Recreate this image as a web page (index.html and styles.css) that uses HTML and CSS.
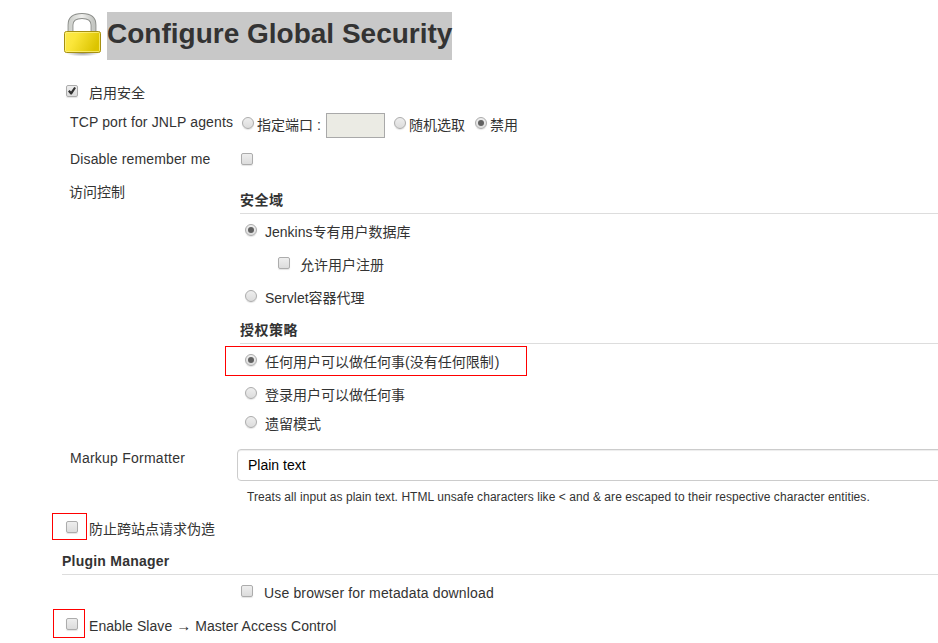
FILE: index.html
```
<!DOCTYPE html>
<html lang="zh">
<head>
<meta charset="utf-8">
<title>Configure Global Security</title>
<link rel="stylesheet" href="styles.css">
</head>
<body>
<main class="page">
  <header class="header">
    <svg class="lock" width="40" height="46" viewBox="0 0 40 46">
      <defs>
        <linearGradient id="body" x1="0" y1="0" x2="1" y2=".3"><stop offset="0" stop-color="#fce94f"/><stop offset=".35" stop-color="#fbe63a"/><stop offset="1" stop-color="#dcc400"/></linearGradient>
        <linearGradient id="metal" x1="0" y1="0" x2="1" y2="0"><stop offset="0" stop-color="#d0d2ce"/><stop offset=".5" stop-color="#eeeeec"/><stop offset="1" stop-color="#c4c6c2"/></linearGradient>
        <radialGradient id="shade"><stop offset="0" stop-color="#000" stop-opacity=".4"/><stop offset="1" stop-color="#000" stop-opacity="0"/></radialGradient>
      </defs>
      <ellipse cx="20.500" cy="41" rx="17" ry="3.500" fill="url(#shade)"/>
      <path d="M8.500 22V13C8.500 7 12.500 4 20 4S31.500 7 31.500 13V22" fill="none" stroke="#8b8d89" stroke-width="5.800"/>
      <path d="M8.500 22V13C8.500 7 12.500 4 20 4S31.500 7 31.500 13V22" fill="none" stroke="url(#metal)" stroke-width="4"/>
      <rect x="2.500" y="19.500" width="36" height="21" rx="2" fill="url(#body)" stroke="#a58f10"/>
      <rect x="3.500" y="20.500" width="34" height="19" rx="1" fill="none" stroke="#fff58c" stroke-opacity=".7"/>
    </svg>
    <h1 class="title">Configure Global Security</h1>
  </header>

  <label class="row enable"><span class="mark"><input type="checkbox" checked></span><span>启用安全</span></label>

  <div class="row tcp">
    <span class="name">TCP port for JNLP agents</span>
    <label class="choice port"><input type="radio" name="port"><span>指定端口 :</span></label>
    <input class="port-field" type="text" disabled>
    <label class="choice random"><input type="radio" name="port"><span>随机选取</span></label>
    <label class="choice"><input type="radio" name="port" checked><span>禁用</span></label>
  </div>

  <div class="row remember">
    <span class="name">Disable remember me</span>
    <input type="checkbox">
  </div>

  <section class="access">
    <span class="access-name">访问控制</span>
    <div class="groups">
      <h2 class="group-title">安全域</h2>
      <label class="option"><input type="radio" name="realm" checked><span>Jenkins专有用户数据库</span></label>
      <label class="option nested"><input type="checkbox"><span>允许用户注册</span></label>
      <label class="option"><input type="radio" name="realm"><span>Servlet容器代理</span></label>
      <h2 class="group-title second">授权策略</h2>
      <label class="option outlined"><input type="radio" name="auth" checked><span>任何用户可以做任何事(没有任何限制<span class="paren">)</span></span></label>
      <label class="option logged"><input type="radio" name="auth"><span>登录用户可以做任何事</span></label>
      <label class="option legacy"><input type="radio" name="auth"><span>遗留模式</span></label>
    </div>
  </section>

  <section class="markup">
    <span class="markup-name">Markup Formatter</span>
    <div class="formatter">
      <div class="select">Plain text</div>
      <p class="help">Treats all input as plain text. HTML unsafe characters like &lt; and &amp; are escaped to their respective character entities.</p>
    </div>
  </section>

  <label class="row csrf"><span class="mark outlined-mark"><input type="checkbox"></span><span>防止跨站点请求伪造</span></label>

  <h2 class="plugin-title">Plugin Manager</h2>
  <label class="row metadata"><input type="checkbox"><span>Use browser for metadata download</span></label>

  <label class="row slave"><span class="mark outlined-mark"><input type="checkbox"></span><span>Enable Slave <span class="arrow">→</span> Master Access Control</span></label>
</main>
</body>
</html>
```
FILE: styles.css
```
* { box-sizing: border-box; }
body {
  margin: 0;
  background: #fff;
  color: #333;
  font: 14px/20px "Liberation Sans", "Noto Sans CJK SC", sans-serif;
  overflow: hidden;
}
.page { padding: 12px 0 0 62px; }
h1, h2, p { margin: 0; }
.header { display: flex; height: 48px; }
.lock { flex: none; margin-right: 5px; }
.title {
  width: 345px;
  height: 48px;
  background: #c8c8c8;
  font-size: 28px;
  line-height: 44px;
  white-space: nowrap;
}

input[type="checkbox"], input[type="radio"] {
  appearance: none;
  flex: none;
  display: grid;
  place-items: center;
  width: 12px;
  height: 12px;
  margin: 0 0 4px;
  border: 1px solid #acacac;
  background: linear-gradient(#eee, #dcdcdc);
  box-shadow: 0 1px 1px #e4e4e4;
}
input[type="checkbox"] { border-radius: 2px; }
input[type="radio"] { border-radius: 50%; }
input[type="radio"]:checked::before {
  content: "";
  width: 6px;
  height: 6px;
  border-radius: 50%;
  background: #606060;
}
input[type="checkbox"]:checked::before {
  content: "";
  width: 8px;
  height: 8px;
  background: #333;
  clip-path: polygon(0 55%, 20% 38%, 38% 55%, 78% 0, 100% 14%, 48% 94%, 32% 94%);
}

.row { display: flex; align-items: center; white-space: nowrap; }
.mark { display: flex; align-items: center; width: 27px; padding-left: 4px; }
.enable { height: 30px; margin-top: 18px; }
.name { width: 180px; padding-left: 8px; letter-spacing: .14px; }
.tcp { height: 34px; }
.tcp .name { margin-bottom: 6px; }
.choice { display: flex; align-items: center; gap: 3px; }
.port { width: 84px; }
.port-field {
  width: 59px;
  height: 25px;
  margin-right: 9px;
  border: 1px solid #a9a9a9;
  background: #ebebe4;
}
.random { width: 81px; }
.remember { height: 34px; }
.remember input { margin: 0 0 0 -1px; }

.access { display: flex; height: 258px; }
.access-name { width: 178px; padding: 6px 0 0 7px; }
.groups { flex: 1; padding-top: 11px; }
.group-title, .plugin-title {
  height: 27px;
  border-bottom: 1px solid #ddd;
  font-size: 14px;
  line-height: 26px;
}
.group-title { letter-spacing: .5px; }
.group-title.second { margin-top: 1px; }
.option { display: flex; align-items: center; gap: 8px; height: 36px; padding-left: 5px; white-space: nowrap; }
.option.nested { height: 30px; padding-left: 38px; gap: 10px; }
.option.outlined {
  width: 302px;
  height: 30px;
  margin: 2px 0 0 -15px;
  padding: 1px 0 0 19px;
  border: 1px solid #f00;
}
.paren { margin-left: 1px; }
.option.logged { height: 38px; }
.option.legacy { height: 20px; }

.markup { display: flex; height: 79px; padding-top: 15px; }
.markup-name { width: 175px; margin-top: -1px; padding-left: 8px; letter-spacing: .24px; }
.formatter { flex: 1; overflow: hidden; }
.select {
  width: 720px;
  height: 32px;
  padding-left: 10px;
  border: 1px solid #ccc;
  border-radius: 4px;
  box-shadow: inset 0 1px 1px rgba(0, 0, 0, .075);
  color: #000;
  line-height: 30px;
}
.help { padding: 6px 0 0 10px; font-size: 12px; letter-spacing: .065px; white-space: nowrap; }
.csrf { height: 27px; }
.csrf > span:last-child, .slave > span:last-child { margin-top: 4px; }
.outlined-mark { margin-left: -10px; margin-right: 2px; width: 35px; height: 27px; padding-left: 13px; border: 1px solid #f00; }
.outlined-mark input { margin: 0; }
.plugin-title { margin-top: 8px; letter-spacing: .23px; }
.metadata { height: 34px; padding-left: 179px; gap: 11px; }
.metadata > span { margin-top: 2px; letter-spacing: .15px; }
.metadata input { margin-bottom: 2px; }
.slave { height: 29px; letter-spacing: .06px; }
.arrow { font-family: "Liberation Serif", serif; font-size: 15px; line-height: 1; }
.slave .outlined-mark { width: 32px; height: 29px; margin-left: -9px; margin-right: 4px; padding-left: 12px; }
```
